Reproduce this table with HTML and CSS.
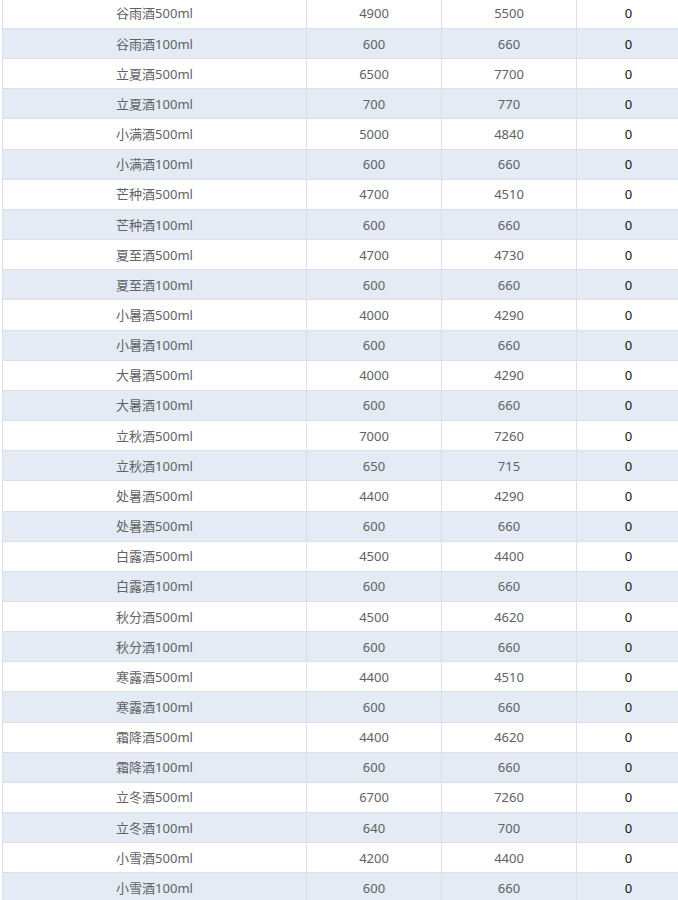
FILE: index.html
```html
<!DOCTYPE html>
<html lang="zh">
<head>
<meta charset="utf-8">
<title>节气酒价格表</title>
<link rel="stylesheet" href="styles.css">
</head>
<body>
<div class="wrap">
<table class="price-table">
<colgroup>
<col class="c-name"><col class="c-num"><col class="c-num"><col class="c-last">
</colgroup>
<tbody>
<tr><td>谷雨酒500ml</td><td>4900</td><td>5500</td><td class="zero">0</td></tr>
<tr><td>谷雨酒100ml</td><td>600</td><td>660</td><td class="zero">0</td></tr>
<tr><td>立夏酒500ml</td><td>6500</td><td>7700</td><td class="zero">0</td></tr>
<tr><td>立夏酒100ml</td><td>700</td><td>770</td><td class="zero">0</td></tr>
<tr><td>小满酒500ml</td><td>5000</td><td>4840</td><td class="zero">0</td></tr>
<tr><td>小满酒100ml</td><td>600</td><td>660</td><td class="zero">0</td></tr>
<tr><td>芒种酒500ml</td><td>4700</td><td>4510</td><td class="zero">0</td></tr>
<tr><td>芒种酒100ml</td><td>600</td><td>660</td><td class="zero">0</td></tr>
<tr><td>夏至酒500ml</td><td>4700</td><td>4730</td><td class="zero">0</td></tr>
<tr><td>夏至酒100ml</td><td>600</td><td>660</td><td class="zero">0</td></tr>
<tr><td>小暑酒500ml</td><td>4000</td><td>4290</td><td class="zero">0</td></tr>
<tr><td>小暑酒100ml</td><td>600</td><td>660</td><td class="zero">0</td></tr>
<tr><td>大暑酒500ml</td><td>4000</td><td>4290</td><td class="zero">0</td></tr>
<tr><td>大暑酒100ml</td><td>600</td><td>660</td><td class="zero">0</td></tr>
<tr><td>立秋酒500ml</td><td>7000</td><td>7260</td><td class="zero">0</td></tr>
<tr><td>立秋酒100ml</td><td>650</td><td>715</td><td class="zero">0</td></tr>
<tr><td>处暑酒500ml</td><td>4400</td><td>4290</td><td class="zero">0</td></tr>
<tr><td>处暑酒500ml</td><td>600</td><td>660</td><td class="zero">0</td></tr>
<tr><td>白露酒500ml</td><td>4500</td><td>4400</td><td class="zero">0</td></tr>
<tr><td>白露酒100ml</td><td>600</td><td>660</td><td class="zero">0</td></tr>
<tr><td>秋分酒500ml</td><td>4500</td><td>4620</td><td class="zero">0</td></tr>
<tr><td>秋分酒100ml</td><td>600</td><td>660</td><td class="zero">0</td></tr>
<tr><td>寒露酒500ml</td><td>4400</td><td>4510</td><td class="zero">0</td></tr>
<tr><td>寒露酒100ml</td><td>600</td><td>660</td><td class="zero">0</td></tr>
<tr><td>霜降酒500ml</td><td>4400</td><td>4620</td><td class="zero">0</td></tr>
<tr><td>霜降酒100ml</td><td>600</td><td>660</td><td class="zero">0</td></tr>
<tr><td>立冬酒500ml</td><td>6700</td><td>7260</td><td class="zero">0</td></tr>
<tr><td>立冬酒100ml</td><td>640</td><td>700</td><td class="zero">0</td></tr>
<tr><td>小雪酒500ml</td><td>4200</td><td>4400</td><td class="zero">0</td></tr>
<tr><td>小雪酒100ml</td><td>600</td><td>660</td><td class="zero">0</td></tr>
</tbody>
</table>
</div>
</body>
</html>
```
FILE: styles.css
```css
html, body {
  margin: 0;
  padding: 0;
  background: #ffffff;
  overflow: hidden;
}
.wrap {
  padding-left: 2px;
  margin-top: -1.17px;
}
.price-table {
  border-collapse: separate;
  border-spacing: 0;
  table-layout: fixed;
  width: 678px;
  font-family: "Noto Sans", "Noto Sans CJK SC", sans-serif;
  font-size: 13px;
  color: #606266;
}
.c-name { width: 304px; }
.c-num { width: 135px; }
.c-last { width: 104px; }
.price-table td {
  height: 30.17px;
  box-sizing: border-box;
  padding: 0;
  text-align: center;
  vertical-align: middle;
  border-left: 1px solid #dcdfe6;
  border-bottom: 1px solid #dcdfe6;
  line-height: 18px;
}
.price-table tr:nth-child(even) td {
  background: #e4ebf5;
}
.price-table td.zero {
  color: #111111;
}
```
